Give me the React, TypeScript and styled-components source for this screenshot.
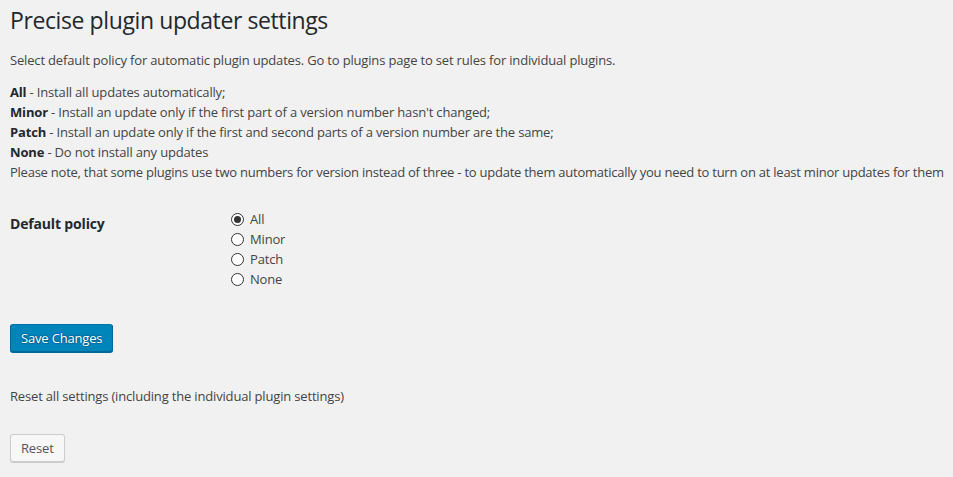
import React, { useState } from "react";
import styled, { createGlobalStyle } from "styled-components";

const GlobalStyle = createGlobalStyle`
  html, body {
    margin: 0;
    padding: 0;
    background: #f1f1f1;
  }
  body {
    font-family: "Open Sans", "Noto Sans", sans-serif;
    font-size: 13px;
    letter-spacing: -0.17px;
    color: #444;
  }
`;

const policies = ["All", "Minor", "Patch", "None"];

const App: React.FunctionComponent = () => {
  const [policy, setPolicy] = useState("All");
  return (
    <Wrap>
      <GlobalStyle />
      <Title>Precise plugin updater settings</Title>
      <Text>
        Select default policy for automatic plugin updates. Go to plugins page to set rules for individual plugins.
      </Text>
      <Text>
        <b>All</b> - Install all updates automatically;
        <br />
        <b>Minor</b> - Install an update only if the first part of a version number hasn't changed;
        <br />
        <b>Patch</b> - Install an update only if the first and second parts of a version number are the same;
        <br />
        <b>None</b> - Do not install any updates
        <br />
        <Note>
          Please note, that some plugins use two numbers for version instead of three - to update them automatically you need to turn on at least minor updates for them
        </Note>
      </Text>
      <FormRow>
        <Label>Default policy</Label>
        <Options>
          {policies.map((p) => (
            <Option key={p} onClick={() => setPolicy(p)}>
              <Radio checked={policy === p} />
              {p}
            </Option>
          ))}
        </Options>
      </FormRow>
      <PrimaryButton>Save Changes</PrimaryButton>
      <ResetText>Reset all settings (including the individual plugin settings)</ResetText>
      <SecondaryButton>Reset</SecondaryButton>
    </Wrap>
  );
};

export default App;

const Wrap = styled.div`
  padding: 0 10px 20px;
  display: flex;
  flex-direction: column;
  align-items: flex-start;
`;

const Title = styled.h1`
  margin: 0;
  padding: 6px 0 0;
  font-size: 23px;
  font-weight: 400;
  line-height: 29px;
  letter-spacing: -0.4px;
  color: #23282d;
`;

const Text = styled.p`
  margin: 15px 0 0;
  line-height: 20px;
  white-space: nowrap;

  & + & {
    margin-top: 12px;
  }

  b {
    font-weight: 700;
    color: #23282d;
  }
`;

const Note = styled.span`
  letter-spacing: -0.24px;
`;

const FormRow = styled.div`
  display: flex;
  margin-top: 12px;
`;

const Label = styled.div`
  width: 200px;
  padding: 21px 10px 19px 0;
  font-size: 14px;
  font-weight: 700;
  line-height: 18px;
  color: #23282d;
`;

const Options = styled.div`
  display: flex;
  flex-direction: column;
  padding: 15px 10px;
`;

const Option = styled.label`
  display: flex;
  align-items: center;
  gap: 6px;
  height: 20px;
  padding-left: 1px;
  font-size: 13px;
  color: #444;
  cursor: pointer;
`;

const Radio = styled.span<{ checked: boolean }>`
  box-sizing: border-box;
  width: 13px;
  height: 13px;
  border: 1px solid #333;
  border-radius: 50%;
  background: #fff;
  display: flex;
  align-items: center;
  justify-content: center;

  &::after {
    content: "";
    width: 7px;
    height: 7px;
    border-radius: 50%;
    background: #333;
    display: ${(p) => (p.checked ? "block" : "none")};
  }
`;

const PrimaryButton = styled.button`
  margin-top: 20px;
  height: 28px;
  padding: 0 10px 1px;
  font-family: inherit;
  font-size: 13px;
  letter-spacing: inherit;
  line-height: 26px;
  color: #fff;
  background: #0085ba;
  border: 1px solid #0073aa;
  border-color: #0073aa #006799 #006799;
  border-radius: 3px;
  box-shadow: 0 1px 0 #006799;
  text-shadow: 0 -1px 1px #006799, 1px 0 1px #006799, 0 1px 1px #006799, -1px 0 1px #006799;
  cursor: pointer;
`;

const ResetText = styled.p`
  margin: 34px 0 0;
  line-height: 20px;
`;

const SecondaryButton = styled.button`
  margin-top: 28px;
  height: 28px;
  padding: 0 10px 1px;
  font-family: inherit;
  font-size: 13px;
  letter-spacing: inherit;
  line-height: 26px;
  color: #555;
  background: #f7f7f7;
  border: 1px solid #ccc;
  border-radius: 3px;
  box-shadow: 0 1px 0 #ccc;
  cursor: pointer;
`;
